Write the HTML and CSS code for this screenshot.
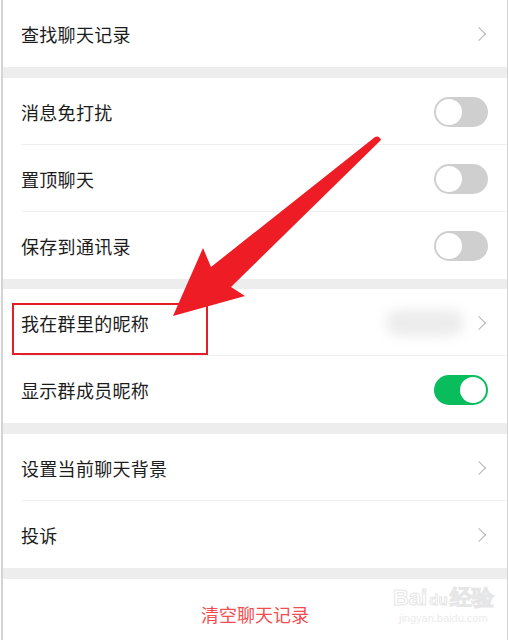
FILE: index.html
```html
<!DOCTYPE html>
<html>
<head>
  <title>聊天信息</title>
  <link rel="stylesheet" href="styles.css">
</head>
<body>
  <div class="page">
    <!-- search -->
    <div class="group">
      <div class="row">
        <span class="label">查找聊天记录</span>
        <span class="chevron"></span>
      </div>
    </div>

    <div class="gap"></div>

    <!-- switches -->
    <div class="group">
      <div class="row">
        <span class="label">消息免打扰</span>
        <span class="switch"></span>
      </div>
      <div class="row line">
        <span class="label">置顶聊天</span>
        <span class="switch"></span>
      </div>
      <div class="row line">
        <span class="label">保存到通讯录</span>
        <span class="switch"></span>
      </div>
    </div>

    <div class="gap thin"></div>

    <!-- nickname -->
    <div class="group">
      <div class="row">
        <span class="label">我在群里的昵称</span>
        <span class="blur-name"></span>
        <span class="chevron"></span>
      </div>
      <div class="row line">
        <span class="label">显示群成员昵称</span>
        <span class="switch on"></span>
      </div>
    </div>

    <div class="gap"></div>

    <div class="group">
      <div class="row">
        <span class="label">设置当前聊天背景</span>
        <span class="chevron"></span>
      </div>
      <div class="row line">
        <span class="label">投诉</span>
        <span class="chevron"></span>
      </div>
    </div>

    <div class="gap"></div>

    <div class="group">
      <div class="danger">清空聊天记录</div>
      <div class="watermark">
        <div class="wm-logo">Bai<span class="wm-du">du</span>经验</div>
        <div class="wm-url">jingyan.baidu.com</div>
      </div>
    </div>

    <!-- annotation: red box + arrow -->
    <div class="mark-box"></div>
    <svg class="arrow" width="508" height="640" viewBox="0 0 508 640">
      <path d="M375 137 Q379 135 381 140 L231 287 L245 296 L173 316 L203 248 L211 267 Z" fill="#ee1c25"/>
    </svg>
  </div>
</body>
</html>
```

FILE: styles.css
```css
body {
  margin: 0;
  font-family: "Noto Sans CJK SC", "Noto Sans", sans-serif;
  background: #fff;
}

.page {
  position: relative;
  width: 504px;
  height: 640px;
  margin-left: 1px;
  border-left: 2px solid #d4d4d4;
  border-right: 2px solid #d4d4d4;
  overflow: hidden;
}

.group {
  background: #fff;
}

.gap {
  height: 11px;
  background: #ededed;
}

.gap.thin {
  height: 10px;
}

.row {
  height: 67px;
  display: flex;
  align-items: center;
  padding: 0 19px 0 18px;
  position: relative;
}

.row.line::before {
  content: "";
  position: absolute;
  top: -1px;
  left: 18px;
  right: 0;
  height: 1px;
  background: #efefef;
}

.label {
  flex: 1;
  font-size: 18px;
  color: #1c1c1c;
  letter-spacing: 0.3px;
}

.chevron {
  width: 9px;
  height: 9px;
  border-top: 1.6px solid #b4b4b4;
  border-right: 1.6px solid #b4b4b4;
  transform: rotate(45deg);
  margin-right: 4px;
}

.switch {
  width: 54px;
  height: 30px;
  border-radius: 15px;
  background: #cfcfcf;
  position: relative;
  box-sizing: border-box;
}

.switch::after {
  content: "";
  position: absolute;
  top: 2px;
  left: 2px;
  width: 26px;
  height: 26px;
  border-radius: 50%;
  background: #fff;
  box-sizing: border-box;
}

.switch.on {
  background: #09bd5d;
}

.switch.on::after {
  left: 26px;
}

.blur-name {
  width: 78px;
  height: 26px;
  background: #ececec;
  border-radius: 13px;
  filter: blur(6px);
  margin-right: 10px;
}

.danger {
  height: 70px;
  display: flex;
  align-items: center;
  justify-content: center;
  font-size: 18px;
  color: #f44c50;
  padding-bottom: 2px;
}

.watermark {
  position: absolute;
  left: 390px;
  top: 586px;
  text-align: center;
}

.wm-logo {
  font-family: "Liberation Sans", sans-serif;
  font-size: 22px;
  font-weight: bold;
  line-height: 24px;
  color: transparent;
  -webkit-text-stroke: 1px #e6e6e6;
}

.wm-du {
  font-size: 15px;
  margin: 0 2px;
}

.wm-url {
  font-family: "Liberation Sans", sans-serif;
  font-size: 11px;
  color: #ebebeb;
}

.mark-box {
  position: absolute;
  left: 9px;
  top: 303px;
  width: 192px;
  height: 48px;
  border: 2px solid #e21f26;
}

.arrow {
  position: absolute;
  left: -3px;
  top: 0;
}
```
